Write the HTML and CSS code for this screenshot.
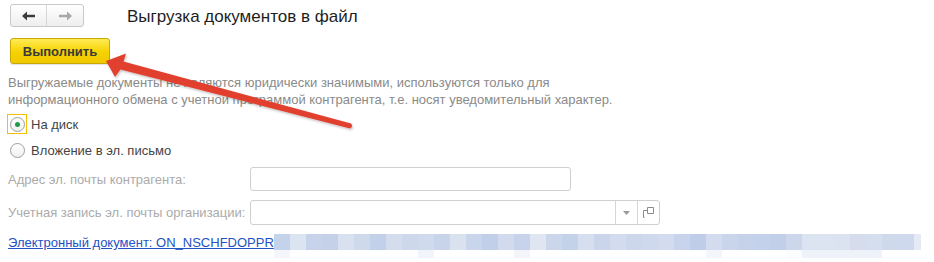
FILE: index.html
```html
<!DOCTYPE html>
<html lang="ru">
<head>
  <meta charset="UTF-8" />
  <title>Выгрузка документов в файл</title>
  <link rel="stylesheet" href="styles.css">
</head>
<body>
  <div class="page">
    <div class="toolbar">
      <div class="nav-group">
        <button class="nav-btn back" title="Назад">
          <svg width="14" height="10" viewBox="0 0 14 10"><path d="M0 5 L5 0.5 L5 3.8 L13 3.8 L13 6.2 L5 6.2 L5 9.5 Z" fill="#3c3c3c"/></svg>
        </button>
        <button class="nav-btn fwd" title="Вперед">
          <svg width="14" height="10" viewBox="0 0 14 10"><path d="M14 5 L9 0.5 L9 3.8 L1 3.8 L1 6.2 L9 6.2 L9 9.5 Z" fill="#a8a8a8"/></svg>
        </button>
      </div>
      <h1 class="title">Выгрузка документов в файл</h1>
    </div>

    <button class="run-btn">Выполнить</button>

    <p class="note">Выгружаемые документы не являются юридически значимыми, используются только для<br>информационного обмена с учетной программой контрагента, т.е. носят уведомительный характер.</p>

    <div class="radio-row focused">
      <span class="radio-box"><span class="radio checked"></span></span>
      <span class="radio-label">На диск</span>
    </div>
    <div class="radio-row">
      <span class="radio-box"><span class="radio"></span></span>
      <span class="radio-label">Вложение в эл. письмо</span>
    </div>

    <div class="field-row first">
      <span class="field-label">Адрес эл. почты контрагента:</span>
      <div class="input short"></div>
    </div>
    <div class="field-row">
      <span class="field-label">Учетная запись эл. почты организации:</span>
      <div class="input long">
        <span class="input-text"></span>
        <span class="input-btn">
          <svg width="7" height="4" viewBox="0 0 7 4"><path d="M0 0 H7 L3.5 4 Z" fill="#9a9a9a"/></svg>
        </span>
        <span class="input-btn">
          <svg width="11" height="11" viewBox="0 0 11 11" fill="none" stroke="#8a8a8a" stroke-width="1"><path d="M4.5 0.5 H10.5 V6.5 H4.5 Z"/><path d="M4.5 3.5 H0.5 V10.5 H1.5 M0.5 10.5"/></svg>
        </span>
      </div>
    </div>

    <div class="link-row">
      <a class="doc-link" href="#">Электронный документ: ON_NSCHFDOPPR</a>
      <div class="blur">
        <div class="blur-top"></div>
        <div class="blur-bottom"></div>
      </div>
    </div>
  </div>

  <svg class="annotation" width="934" height="262" viewBox="0 0 934 262">
    <defs>
      <filter id="sh" x="-10%" y="-30%" width="120%" height="160%">
        <feDropShadow dx="1" dy="1.5" stdDeviation="1.2" flood-color="#000" flood-opacity="0.25"/>
      </filter>
    </defs>
    <path filter="url(#sh)" fill="#e2412f"
      d="M106 61 L126 53.5 L123.5 61.5 L351 123.5 Q353.5 126.5 350 128.5 L120.5 69.5 L115 77 Z"/>
  </svg>
</body>
</html>
```

FILE: styles.css
```css
body {
  margin: 0;
  font-family: "Liberation Sans", Arial, sans-serif;
  font-size: 13px;
  color: #333;
  background: #fff;
}
.page {
  padding: 4px 0 0 8px;
}
.toolbar {
  display: flex;
  align-items: center;
  height: 23px;
}
.nav-group {
  display: flex;
  margin-left: 2px;
  border: 1px solid #c9c9c9;
  border-radius: 3px;
  overflow: hidden;
  background: linear-gradient(#ffffff, #eeeeee);
}
.nav-btn {
  width: 36px;
  height: 21px;
  padding: 0;
  border: 0;
  background: transparent;
  display: flex;
  align-items: center;
  justify-content: center;
}
.nav-btn.back {
  border-right: 1px solid #d6d6d6;
}
.title {
  margin: 0 0 0 43px;
  font-size: 17px;
  font-weight: normal;
  color: #1e1e1e;
  line-height: 23px;
  position: relative;
  top: 1px;
}
.run-btn {
  display: block;
  margin: 11px 0 0 2px;
  width: 100px;
  height: 26px;
  padding: 0;
  border: 1px solid #c9a900;
  border-radius: 3px;
  background: linear-gradient(#ffeb55, #f6d200 55%, #f0c800);
  font-family: inherit;
  font-size: 13px;
  font-weight: bold;
  color: #3a3a3a;
  box-shadow: 0 1px 1px rgba(0, 0, 0, 0.12);
}
.note {
  margin: 10px 0 0;
  line-height: 17px;
  color: #8a8a8a;
}
.radio-row {
  display: flex;
  align-items: center;
  height: 20px;
  margin-top: 6px;
}
.radio-row + .radio-row {
  margin-top: 6px;
}
.radio-box {
  width: 18px;
  height: 18px;
  margin-left: -1px;
  border: 1px solid transparent;
  display: flex;
  align-items: center;
  justify-content: center;
}
.focused .radio-box {
  border-color: #f2c200;
}
.radio {
  width: 13px;
  height: 13px;
  border: 1px solid #9e9e9e;
  border-radius: 50%;
  background: linear-gradient(#ffffff, #f0f0f0);
  display: flex;
  align-items: center;
  justify-content: center;
}
.radio.checked::after {
  content: "";
  width: 5px;
  height: 5px;
  border-radius: 50%;
  background: #1f9a48;
}
.radio-label {
  margin-left: 4px;
  color: #444;
}
.field-row {
  display: flex;
  align-items: center;
  margin-top: 9px;
}
.field-row.first {
  margin-top: 7px;
}
.field-label {
  width: 242px;
  color: #ababab;
}
.input {
  box-sizing: border-box;
  height: 24px;
  border: 1px solid #cfcfcf;
  border-radius: 3px;
  background: #fff;
  display: flex;
}
.input.short {
  width: 321px;
}
.input.long {
  width: 410px;
  height: 25px;
}
.input-text {
  flex: 1;
}
.input-btn {
  width: 21px;
  border-left: 1px solid #d6d6d6;
  display: flex;
  align-items: center;
  justify-content: center;
}
.link-row {
  display: flex;
  align-items: flex-start;
  margin-top: 9px;
}
.doc-link {
  color: #2352c4;
  text-decoration: underline;
  line-height: 16px;
  padding-top: 1px;
}
.blur {
  width: 647px;
}
.blur-top {
  height: 16px;
  background: linear-gradient(to right,
    #c4d2ea 0 16px, #dbe4f1 16px 32px, #c6d3ea 32px 48px, #c4d1e9 48px 64px,
    #d9e1f0 64px 80px, #cfd9ec 80px 96px, #c2d0e9 96px 112px, #d4ddee 112px 128px,
    #cdd8ec 128px 144px, #d0daed 144px 160px, #c8d4ea 160px 176px, #dae2f0 176px 192px,
    #c9d5eb 192px 208px, #c1cfe8 208px 224px, #d1dbed 224px 240px, #c7d3ea 240px 256px,
    #dfe6f2 256px 272px, #cbd6eb 272px 288px, #c3d1e9 288px 304px, #d6dfef 304px 320px,
    #cad5eb 320px 336px, #d2dcee 336px 352px, #ccd7ec 352px 368px, #cfd9ed 368px 384px,
    #d3dcee 384px 400px, #c7d4eb 400px 416px, #bfcde8 416px 432px, #d2dcee 432px 448px,
    #c9d5eb 448px 464px, #c5d2ea 464px 480px, #c4d1ea 480px 496px, #c2cfe8 496px 512px,
    #ccd7ec 512px 528px, #dde4f1 528px 544px, #dde4f1 544px 560px, #dbe2f0 560px 576px,
    #d6dcec 576px 592px, #d4deef 592px 608px, #ced9ec 608px 624px, #cfd9ed 624px 640px,
    #e6eaf5 640px 647px);
}
.blur-bottom {
  height: 8px;
  background: linear-gradient(to right,
    #f4f6fb 0 16px, #fff 16px 144px, #f1f4fa 144px 160px, #fff 160px 240px,
    #f3f5fb 240px 256px, #fff 256px 432px, #f3f6fb 432px 448px, #fff 448px 512px,
    #fbfcfe 512px 528px, #eef2f9 528px 592px, #eef2fa 592px 608px, #fff 608px 647px);
}
.annotation {
  position: absolute;
  left: 0;
  top: 0;
  pointer-events: none;
}
```
